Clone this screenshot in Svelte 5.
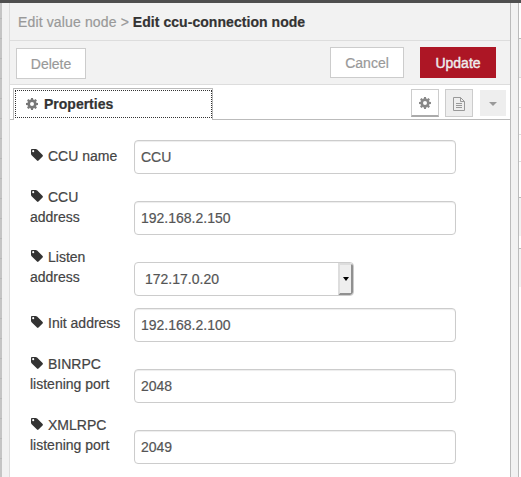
<script>
  const rows = [
    { first: 'CCU name', value: 'CCU', low: true },
    { first: 'CCU', second: 'address', value: '192.168.2.150', low: true },
    { first: 'Listen', second: 'address', value: '172.17.0.20', select: true },
    { first: 'Init address', value: '192.168.2.100' },
    { first: 'BINRPC', second: 'listening port', value: '2048' },
    { first: 'XMLRPC', second: 'listening port', value: '2049' }
  ];
  const teeth = [0, 45, 90, 135, 180, 225, 270, 315];
</script>

{#snippet gearIcon()}
  <svg class="gear" viewBox="-6 -6 12 12">
    <circle r="3.250" fill="none" stroke="currentColor" stroke-width="2.500" />
    {#each teeth as angle}
      <path d="M-1.350-4L-.95-6H.95L1.350-4z" fill="currentColor" transform="rotate({angle})" />
    {/each}
  </svg>
{/snippet}

<div class="screen">
  <div class="topbar"></div>
  <div class="body">
    <div class="canvas"></div>
    <div class="gutter"></div>
    <main class="tray">
      <header>
        <span class="crumb">Edit value node &gt;</span>
        <b>Edit ccu-connection node</b>
      </header>
      <div class="toolbar">
        <button class="delete">Delete</button>
        <button class="cancel">Cancel</button>
        <button class="update">Update</button>
      </div>
      <div class="tabs">
        <div class="edge"></div>
        <div class="tab"><div class="focus">{@render gearIcon()}<b>Properties</b></div></div>
        <div class="tools">
          <div class="tool active">{@render gearIcon()}</div>
          <div class="tool">
            <svg width="12" height="14" viewBox="0 0 12 14" fill="none" stroke="#999"><path d="M.5.5h7l4 4v9H.5zM7.500.5v4h4M3 6.500h6M3 8.500h6M3 10.500h6" /></svg>
          </div>
          <div class="tool menu"><i></i></div>
        </div>
      </div>
      <form>
        {#each rows as row}
          <div class="row">
            <div class="label" class:low={row.low}>
              <div>
                <svg class="tag" viewBox="0 0 12 12"><path fill-rule="evenodd" d="M0 .9Q0 0 .9 0h3.700q.8 0 1.500.6l5.500 5.300q.7.800 0 1.500l-4.100 4.200q-.7.700-1.500 0L.6 6.200Q0 5.500 0 4.700zm2.200.2a1.050 1.050 0 1 0 0 2.100 1.050 1.050 0 0 0 0-2.100z" /></svg>
                <span>{row.first}</span>
              </div>
              {#if row.second}<div>{row.second}</div>{/if}
            </div>
            {#if row.select}
              <div class="field select"><span>{row.value}</span><div class="drop"><i></i></div></div>
            {:else}
              <div class="field">{row.value}</div>
            {/if}
          </div>
        {/each}
      </form>
    </main>
    <div class="gutter right"></div>
    <div class="sidebar"><div class="s1"></div><div class="s2"></div><div class="s3"></div><div class="s3b"></div><div class="s3b"></div><div class="s4"></div><div class="s5"></div><div class="s6"></div><div class="s7"></div></div>
  </div>
</div>

<style>
  :global(body) { margin: 0; }
  .screen, .screen * { box-sizing: border-box; }
  .screen {
    width: 521px; height: 477px; overflow: hidden; display: flex; flex-direction: column;
    font: 14px/20px "Liberation Sans", Arial, sans-serif; color: #444; background: #fff;
    -webkit-text-stroke: .2px currentColor;
  }
  .topbar { height: 3px; background: #4f4f4f; flex: none; }
  .body { flex: 1; display: flex; min-height: 0; }
  .canvas { width: 2px; background: repeating-linear-gradient(#c5c5c5 0 15px, #b8b8b8 15px 16px, #c5c5c5 16px 20px); }
  .gutter { width: 8px; background: #f2f2f2; border-right: 1px solid #ddd; }
  .gutter.right { border-left: 1px solid #bbb; border-right: 1px solid #bbb; width: 9px; }
  .tray { width: 500px; }
  header { height: 38px; background: #f2f2f2; border-bottom: 1px solid #ddd; padding: 9px 8px; white-space: nowrap; color: #333; }
  .crumb { color: #999; letter-spacing: .14px; }
  header b { letter-spacing: .05px; }
  .toolbar { height: 44px; background: #f2f2f2; border-bottom: 1px solid #ddd; display: flex; padding: 6px 14px 0 6px; }
  button { font: inherit; height: 31px; padding: 0; background: #fff; border: 1px solid #ccc; color: #999; -webkit-text-stroke: .2px currentColor; }
  .delete { width: 70px; margin-top: 1px; }
  .cancel { width: 74px; margin-left: auto; }
  .update { width: 76px; margin-left: 16px; background: #ad1625; border-color: #ad1625; color: #eee; -webkit-text-stroke: .4px #eee; }
  .tabs { height: 35px; display: flex; padding-top: 3px; }
  .edge { width: 3px; border-bottom: 1px solid #bbb; }
  .tab { width: 200px; border: 1px solid #bbb; border-bottom: 0; padding: 1px 0 1px 1px; }
  .focus { height: 28px; border: 1px dotted #333; display: flex; align-items: center; padding-left: 10px; color: #333; }
  .gear { width: 12px; height: 12px; color: #777; display: block; }
  .tool .gear { color: #888; margin-top: 1px; }
  .focus b { margin-left: 6px; }
  .tools { flex: 1; border-bottom: 1px solid #bbb; display: flex; justify-content: flex-end; gap: 6px; padding: 1px 4px 0 0; }
  .tool { width: 28px; height: 28px; border: 1px solid #ccc; background: #eee; display: flex; align-items: center; justify-content: center; }
  .tool svg { margin-top: 1px; }
  .tool.active { background: #fff; border-bottom: 2px solid #aaa; }
  .tool.menu { width: 26px; height: 26px; border: 0; margin: 1px 0 0 1px; }
  .menu i { border: 4px solid transparent; border-top: 4px solid #999; border-bottom: 0; margin-top: 2px; }
  form { padding: 20px 0 0 20px; display: flex; flex-direction: column; gap: 12px; }
  .row { display: flex; align-items: flex-end; }
  .label { width: 104px; margin-bottom: 9px; white-space: nowrap; }
  .label.low { margin: 1px 0 8px; }
  .label > div { display: flex; height: 20px; }
  .tag { width: 12px; height: 12px; fill: #333; margin: 3px 5px 0 1px; }
  .field { width: 322px; height: 34px; border: 1px solid #ccc; border-radius: 4px; padding: 6px 6px 5px; color: #555; box-shadow: inset 0 1px 1px rgba(0, 0, 0, .075); }
  .select { width: 220px; padding: 0; display: flex; justify-content: space-between; box-shadow: none; overflow: hidden; }
  .select span { padding: 6px 0 0 10px; }
  .drop { width: 15px; background: #eee; border: 2px solid #ddd; border-right-color: #909090; border-bottom-color: #909090; display: flex; align-items: center; justify-content: center; border-radius: 0 3px 3px 0; }
  .drop i { border: 3.5px solid transparent; border-top: 4px solid #000; border-bottom: 0; }
  .sidebar { width: 2px; }
  .s1 { height: 36px; border-bottom: 1px solid #bbb; }
  .s2 { height: 39px; background: #f2f2f2; border-bottom: 1px solid #ddd; }
  .s3 { height: 30px; border-bottom: 1px solid #ddd; }
  .s3b { height: 27px; border-bottom: 1px solid #ddd; }
  .s4 { height: 36px; border-bottom: 1px solid #bbb; }
  .s5 { height: 38px; background: #f2f2f2; }
  .s6 { height: 13px; border-bottom: 1px solid #bbb; }
  .s7 { height: 38px; background: #f2f2f2; }
</style>
